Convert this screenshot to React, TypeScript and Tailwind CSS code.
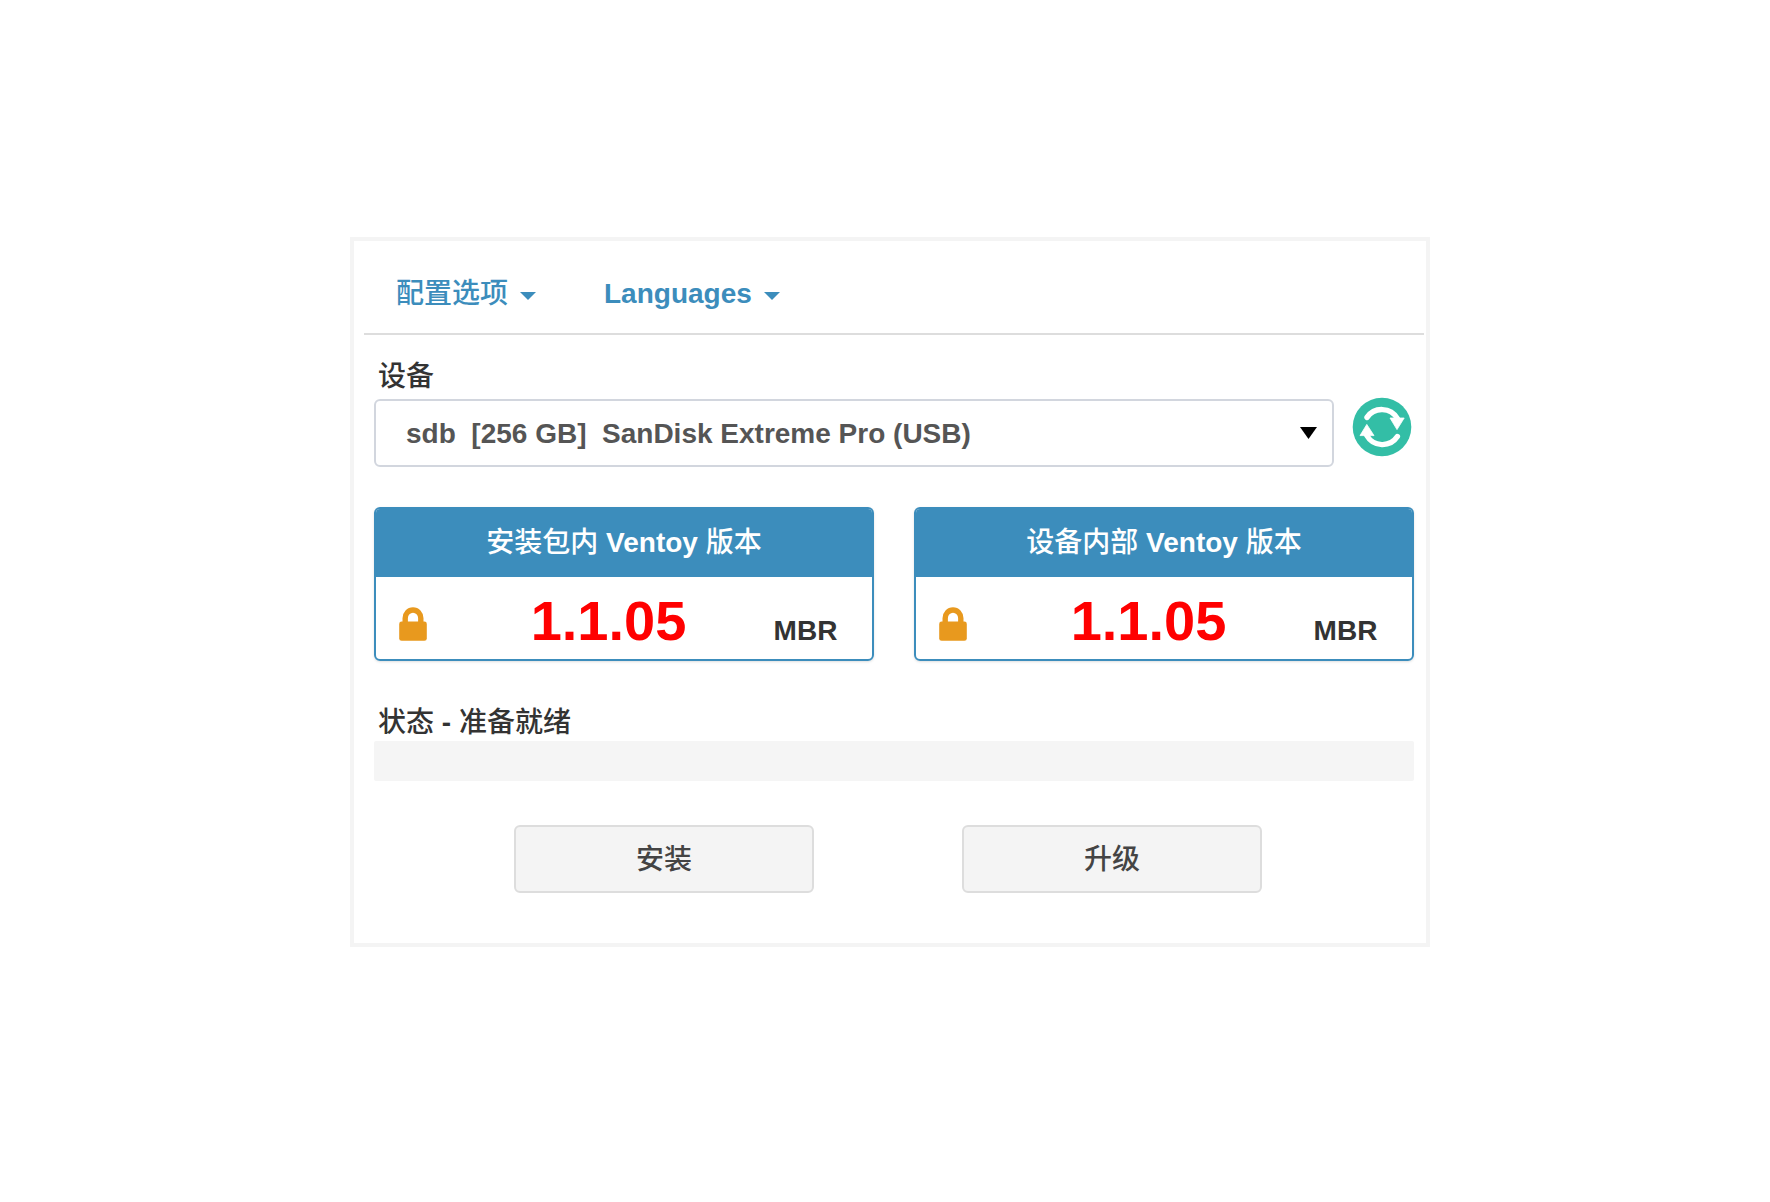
import React from "react";

const CaretIcon = () => (
  <svg width="16" height="8" viewBox="0 0 16 8" fill="currentColor" aria-hidden="true" className="mt-1">
    <path d="M0 0h16L8 8z" />
  </svg>
);

const LockIcon = () => (
  <svg width="28" height="33" viewBox="0 0 28 33" role="img" aria-label="安全启动" className="inline-block overflow-visible align-baseline text-[#e8991e]">
    <path d="M6.2 17V11.2a7.8 8.2 0 0 1 15.6 0V17" fill="none" stroke="currentColor" strokeWidth="5.4" />
    <rect x="0.2" y="14.6" width="27.6" height="19.2" rx="2.4" fill="currentColor" />
  </svg>
);

const RefreshIcon = () => (
  <svg width="60" height="60" viewBox="-30 -30 60 60" aria-hidden="true">
    <circle r="29.3" fill="#33bea6" />
    <g fill="none" stroke="#fff" strokeWidth="5.4" strokeLinecap="round">
      <path d="M-15 -9.6A18 18 0 0 1 15.4 -8.5" />
      <path d="M15.4 9.6A18 18 0 0 1 -15.2 8.5" />
    </g>
    <g fill="#fff" stroke="#fff" strokeWidth="0.8" strokeLinejoin="round">
      <path d="M8 -9H22.2L15 2.6z" />
      <path d="M-22 8.6H-8L-15.2 -2.6z" />
    </g>
  </svg>
);

function NavButton({ children }: { children: React.ReactNode }) {
  return (
    <button type="button" className="flex h-full cursor-pointer items-center gap-3 px-8 pt-3.5 text-[#3c8dbc]">
      {children}
      <CaretIcon />
    </button>
  );
}

function VersionCard({ title, version, style }: { title: string; version: string; style: string }) {
  return (
    <section className="overflow-hidden rounded-md border-2 border-[#3c8dbc] shadow-sm">
      <h2 className="bg-[#3c8dbc] text-center leading-[68px] font-medium text-white">
        {title} <span className="font-bold">Ventoy</span> 版本
      </h2>
      <div className="grid grid-cols-[102px_1fr_133px] items-baseline pt-4 leading-14">
        <div className="pl-[23px]">
          <LockIcon />
        </div>
        <div className="text-center text-[56px] leading-14 font-bold text-[#ff0000]">{version}</div>
        <div className="text-center font-bold">{style}</div>
      </div>
    </section>
  );
}

function ActionButton({ children }: { children: React.ReactNode }) {
  return (
    <button type="button" className="h-17 w-75 cursor-pointer rounded-md border-2 border-[#dddddd] bg-[#f4f4f4] pt-0.5 font-medium text-[#444444]">
      {children}
    </button>
  );
}

export default function App() {
  return (
    <div className="min-h-screen bg-white pt-[237px] pl-2.5 font-['Liberation_Sans','Noto_Sans_CJK_SC',sans-serif] text-[28px] text-[#333333]">
      <main className="mx-auto w-full max-w-[1080px] border-4 border-[#f4f4f4] pb-[50px]">
        <nav className="mr-0.5 ml-2.5 flex h-[94px] gap-1 border-b-2 border-[#dddddd]">
          <NavButton>
            <span className="font-medium">配置选项</span>
          </NavButton>
          <NavButton>
            <span className="font-bold">Languages</span>
          </NavButton>
        </nav>

        <div className="mt-6 mr-3 ml-5">
          <label htmlFor="device" className="mb-0.5 block pl-1 leading-9 font-medium">
            设备
          </label>
          <div className="flex items-start gap-[18px] pr-0.5">
            <div className="relative mt-0.5 flex-1">
              <select
                id="device"
                className="block h-17 w-full appearance-none rounded-md border-2 border-[#d2d6de] bg-white px-[30px] pt-0.5 font-bold text-[#555555]"
              >
                <option>{"sdb\u00a0 [256 GB]\u00a0 SanDisk Extreme Pro (USB)"}</option>
              </select>
              <svg width="17" height="12" viewBox="0 0 17 12" aria-hidden="true" className="pointer-events-none absolute top-7 right-[17px]">
                <path d="M0 0h17L8.5 12z" fill="#000" />
              </svg>
            </div>
            <button type="button" aria-label="刷新" className="cursor-pointer">
              <RefreshIcon />
            </button>
          </div>

          <div className="mt-10 grid grid-cols-2 gap-10">
            <VersionCard title="安装包内" version="1.1.05" style="MBR" />
            <VersionCard title="设备内部" version="1.1.05" style="MBR" />
          </div>

          <p className="mt-11 pl-1 leading-9 font-medium">
            状态 <span className="font-bold">-</span> 准备就绪
          </p>
          <div role="progressbar" aria-label="状态" aria-valuenow={0} className="h-10 rounded-xs bg-[#f5f5f5]" />

          <div className="mt-11 flex justify-center gap-[148px] pr-3">
            <ActionButton>安装</ActionButton>
            <ActionButton>升级</ActionButton>
          </div>
        </div>
      </main>
    </div>
  );
}
